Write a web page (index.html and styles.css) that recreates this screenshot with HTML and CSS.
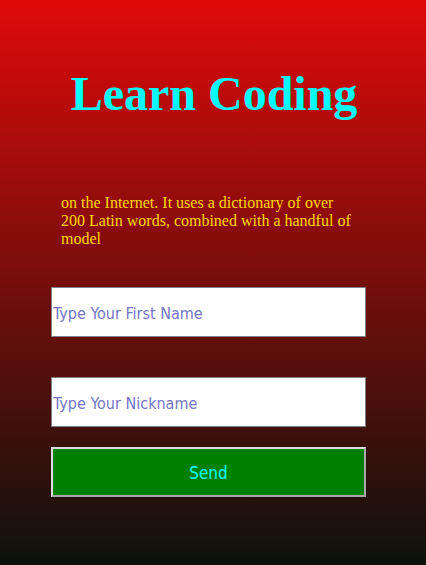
FILE: index.html
```html
<!DOCTYPE html>
<html>
<head>
<meta charset="utf-8">
<link rel="stylesheet" href="styles.css">
</head>
<body>
<div class="page">
  <h1 class="title">Learn Coding</h1>
  <div class="form">
    <p class="intro">on the Internet. It uses a dictionary of over 200 Latin words, combined with a handful of model</p>
    <input class="field" type="text" placeholder="Type Your First Name">
    <input class="field second" type="text" placeholder="Type Your Nickname">
    <button class="send" type="button">Send</button>
  </div>
</div>
</body>
</html>
```
FILE: styles.css
```css
html, body {
  margin: 0;
  padding: 0;
}
body {
  height: 565px;
  background: linear-gradient(to bottom, #df0a0a 0%, #0c120c 100%);
  font-family: "Liberation Serif", "Times New Roman", serif;
}
.page {
  display: flex;
  flex-direction: column;
  padding-top: 66px;
}
.title {
  margin: 0;
  padding-left: 2px;
  text-align: center;
  font-family: "Liberation Serif", serif;
  font-weight: bold;
  font-size: 48px;
  line-height: 56px;
  color: #00ffff;
}
.form {
  display: flex;
  flex-direction: column;
  width: 315px;
  margin-left: 51px;
  padding-top: 72px;
}
.intro {
  margin: 0;
  padding: 0 10px;
  font-size: 16px;
  line-height: 18px;
  color: #ffd700;
}
.field {
  box-sizing: border-box;
  height: 50px;
  margin: 0;
  padding: 2px 1px 0;
  border: 1px solid #80808a;
  background: #fff;
  font-family: "DejaVu Sans Condensed", "DejaVu Sans", sans-serif;
  font-stretch: condensed;
  font-size: 16px;
  margin-top: 39px;
}
.field::placeholder {
  color: #7474c8;
}
.second {
  margin-top: 40px;
}
.send {
  box-sizing: border-box;
  height: 50px;
  margin-top: 20px;
  padding-top: 2px;
  border: 2px solid #dcdcdc;
  border-right-color: #a8a8a8;
  border-bottom-color: #a8a8a8;
  background: #008000;
  color: #00ffff;
  font-family: "DejaVu Sans Condensed", "DejaVu Sans", sans-serif;
  font-stretch: condensed;
  font-size: 17px;
}
```
